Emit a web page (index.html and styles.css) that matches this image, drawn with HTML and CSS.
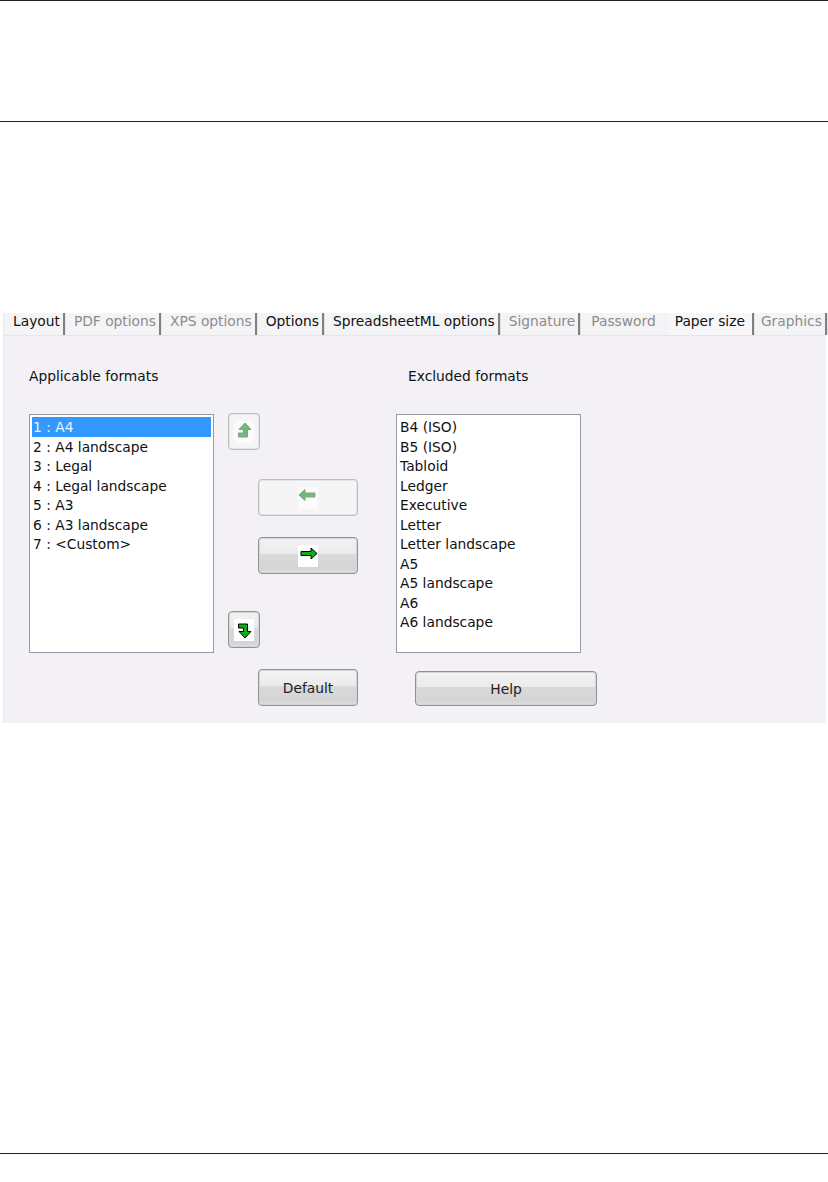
FILE: index.html
```html
<!DOCTYPE html>
<html lang="en">

<head>
  <meta charset="UTF-8">
  <title>Paper size</title>
  <link rel="stylesheet" href="styles.css">
</head>

<body>
  <div class="page-head"></div>
  <div class="dialog">
    <div class="tabs">
      <span class="tab">Layout</span>
      <span class="tab off">PDF options</span>
      <span class="tab off">XPS options</span>
      <span class="tab">Options</span>
      <span class="tab">SpreadsheetML options</span>
      <span class="tab off">Signature</span>
      <span class="tab off no-line">Password</span>
      <span class="tab current">Paper size</span>
      <span class="tab off">Graphics</span>
    </div>
    <div class="panel">
      <div class="col-left">
        <div class="label">Applicable formats</div>
        <ul class="list">
          <li class="selected">1 : A4</li>
          <li>2 : A4 landscape</li>
          <li>3 : Legal</li>
          <li>4 : Legal landscape</li>
          <li>5 : A3</li>
          <li>6 : A3 landscape</li>
          <li>7 : &lt;Custom&gt;</li>
        </ul>
      </div>
      <div class="col-mid">
        <button class="btn square disabled btn-up">
          <svg width="20" height="22" viewBox="0 0 20 22">
            <rect width="20" height="22" fill="#fbfbfb"/>
            <path d="M11 2 L17 8.5 H13.5 V16 H4.5 V12 H9.5 V8.5 H5 Z" fill="#6fbb78" stroke="#8a9a8c"/>
          </svg>
        </button>
        <button class="btn wide disabled btn-left">
          <svg width="20" height="22" viewBox="0 0 20 22">
            <rect width="20" height="22" fill="#fbfbfb"/>
            <path d="M1 8 L7 2.5 V6 H17 V10 H7 V13.5 Z" fill="#6fbb78" stroke="#8aa08c"/>
          </svg>
        </button>
        <button class="btn wide btn-right">
          <svg width="20" height="22" viewBox="0 0 20 22">
            <rect width="20" height="22" fill="#fff"/>
            <path d="M19 8.5 L13 3 V6.5 H3 V10.5 H13 V14 Z" fill="#0fae16" stroke="#000"/>
          </svg>
        </button>
        <button class="btn square btn-down">
          <svg width="20" height="22" viewBox="0 0 20 22">
            <rect width="20" height="22" fill="#fff"/>
            <path d="M11 19 L17 12.5 H13.5 V5 H4.5 V9 H9.5 V12.5 H5 Z" fill="#0fae16" stroke="#000"/>
          </svg>
        </button>
        <button class="btn wide btn-default">Default</button>
      </div>
      <div class="col-right">
        <div class="label label-right">Excluded formats</div>
        <ul class="list">
          <li>B4 (ISO)</li>
          <li>B5 (ISO)</li>
          <li>Tabloid</li>
          <li>Ledger</li>
          <li>Executive</li>
          <li>Letter</li>
          <li>Letter landscape</li>
          <li>A5</li>
          <li>A5 landscape</li>
          <li>A6</li>
          <li>A6 landscape</li>
        </ul>
        <button class="btn btn-help">Help</button>
      </div>
    </div>
  </div>
  <div class="page-foot"></div>
</body>

</html>
```

FILE: styles.css
```css
* {
  padding: 0;
  margin: 0;
  box-sizing: border-box;
}

html,
body {
  background-color: #fff;
}

body {
  width: 828px;
  height: 1182px;
  font: 13.8px/19.5px "DejaVu Sans", sans-serif;
  color: #111;
  overflow: hidden;
}

.page-head {
  height: 122px;
  border-top: 1px solid #222;
  border-bottom: 1px solid #222;
}

.dialog {
  width: 823px;
  height: 410px;
  margin: 191px 0 0 3px;
  background-color: #f3f1f5;
  border-left: 1px solid #e8e7ea;
}

.page-foot {
  height: 1px;
  margin-top: 430px;
  background-color: #222;
}

.tabs {
  display: flex;
  height: 23px;
  padding-left: 3px;
  background-color: #f4f3f5;
  border-bottom: 1px solid #e6e5e8;
}

.tab {
  padding: 0 3px 0 6px;
  line-height: 16px;
  height: 22px;
  white-space: nowrap;
  border-right: 2px solid #808080;
  box-shadow: 1px 0 0 #e4e3e6;
  margin-right: 3px;
}

.tab.off {
  color: #8c8c8c;
}

.tab.no-line {
  padding: 0 10px 0 8px;
  border-right: none;
  box-shadow: none;
}

.tab.current {
  color: #111;
  padding-right: 7px;
  margin-right: 1px;
  background-color: #f7f6f8;
}

.panel {
  display: flex;
  padding-left: 25px;
}

.label {
  margin-top: 31px;
  height: 19px;
}

.label-right {
  padding-left: 12px;
}

.list {
  list-style: none;
  width: 185px;
  height: 239px;
  margin-top: 28px;
  padding: 2px;
  background-color: #fff;
  border: 1px solid #9a9aa4;
}

.list li {
  height: 19.5px;
  padding: 1px 0 0 1px;
}

.list li.selected {
  background-color: #3399ff;
  color: #e8f3ff;
}

.col-left {
  width: 199px;
  flex: none;
}

.col-mid {
  width: 168px;
  flex: none;
  display: flex;
  flex-direction: column;
  align-items: flex-start;
}

.btn {
  display: flex;
  align-items: center;
  justify-content: center;
  font: inherit;
  color: #222;
  border: 1px solid #929292;
  border-radius: 4px;
  box-shadow: inset 0 0 0 1px #d6d6d6;
  background: linear-gradient(#f3f3f3 0, #efefef 20%, #ebebeb 45%, #d9d9d9 46%, #d5d5d5 88%, #dedede 100%);
}

.btn.disabled {
  border-color: #bcbcbc;
  box-shadow: inset 0 0 0 1px #e6e6e6;
  background: #f4f5f4;
}

.square {
  width: 32px;
  height: 37px;
}

.wide {
  width: 100px;
  height: 37px;
  margin-left: 30px;
}

.btn-up {
  margin-top: 77px;
}

.btn-left {
  margin-top: 29px;
}

.btn-right {
  margin-top: 21px;
}

.btn-down {
  margin-top: 37px;
}

.btn-default {
  margin-top: 21px;
  padding-top: 2px;
}

.btn-help {
  width: 182px;
  height: 35px;
  margin: 18px 0 0 19px;
  padding-top: 3px;
}
```
